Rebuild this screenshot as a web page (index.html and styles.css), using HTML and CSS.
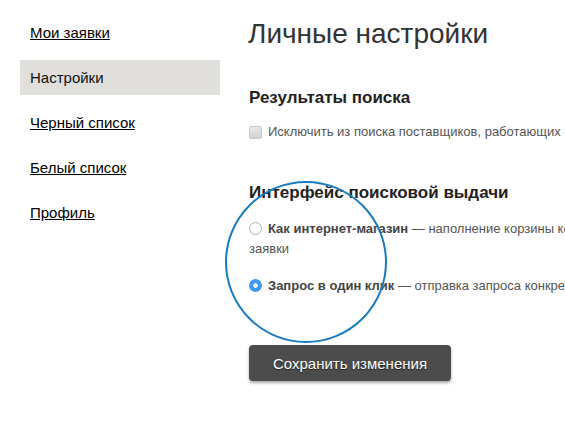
FILE: index.html
```html
<!DOCTYPE html>
<html lang="ru">
<head>
<meta charset="utf-8">
<title>Личные настройки</title>
<link rel="stylesheet" href="styles.css">
</head>
<body>
<div class="page">
  <nav class="sidebar">
    <a class="nav-item" href="#">Мои заявки</a>
    <span class="nav-item active">Настройки</span>
    <a class="nav-item" href="#">Черный список</a>
    <a class="nav-item" href="#">Белый список</a>
    <a class="nav-item" href="#">Профиль</a>
  </nav>
  <main class="content">
    <h1 class="title">Личные настройки</h1>
    <h2 class="section-title first">Результаты поиска</h2>
    <label class="check-row"><span class="checkbox"></span><span class="check-text">Исключить из поиска поставщиков, работающих</span></label>
    <h2 class="section-title second">Интерфейс поисковой выдачи</h2>
    <p class="radio-row one"><span class="radio"></span><b>Как интернет-магазин</b> — наполнение корзины конкретными товарами и отправка<br>заявки</p>
    <p class="radio-row two"><span class="radio checked"></span><b>Запрос в один клик</b> — отправка запроса конкретному поставщику</p>
    <button class="save-btn" type="button">Сохранить изменения</button>
  </main>
</div>
<div class="lens"></div>
</body>
</html>
```
FILE: styles.css
```css
html, body {
  margin: 0;
  padding: 0;
  background: #fff;
  overflow: hidden;
}
body {
  width: 565px;
  height: 440px;
  position: relative;
  font-family: "Liberation Sans", Arial, Helvetica, sans-serif;
}
.page {
  display: flex;
  align-items: flex-start;
  padding-left: 20px;
}
.sidebar {
  width: 200px;
  flex: none;
  display: flex;
  flex-direction: column;
  gap: 10px;
  padding-top: 15px;
}
.nav-item {
  display: block;
  height: 35px;
  line-height: 35px;
  padding-left: 10px;
  font-size: 15px;
  color: #000;
  text-decoration: underline;
}
.nav-item.active {
  background: #e0dfdb;
  text-decoration: none;
  color: #111;
}
.content {
  flex: none;
  width: 560px;
  margin-left: 29px;
  padding-top: 18px;
}
.title {
  margin: 0;
  font-size: 28px;
  line-height: 32px;
  font-weight: normal;
  color: #333;
  margin-left: -1px;
}
.section-title {
  margin: 0;
  font-size: 17px;
  line-height: 20px;
  font-weight: bold;
  color: #222;
}
.section-title.first { margin-top: 38px; }
.section-title.second { margin-top: 41px; }
.check-row {
  display: flex;
  align-items: center;
  gap: 6px;
  margin-top: 14px;
  font-size: 13px;
  line-height: 20px;
  color: #555;
  white-space: nowrap;
}
.checkbox {
  width: 13px;
  height: 13px;
  box-sizing: border-box;
  border: 1px solid #c8c8c8;
  border-radius: 2px;
  background: linear-gradient(#e9e9e9, #d2d2d2);
  flex: none;
}
.radio-row {
  margin: 16px 0 0;
  font-size: 13px;
  line-height: 20px;
  color: #555;
  white-space: nowrap;
}
.radio-row.two { margin-top: 17px; }
.radio-row b { color: #444; }
.radio {
  display: inline-block;
  width: 13px;
  height: 13px;
  box-sizing: border-box;
  border-radius: 50%;
  border: 1px solid #b3b3b3;
  background: #fff;
  vertical-align: -2px;
  margin-right: 6px;
}
.radio.checked {
  border: none;
  background: radial-gradient(circle, #fff 0 2px, #3d98f7 2.5px);
}
.save-btn {
  display: block;
  margin-top: 49px;
  width: 202px;
  height: 36px;
  border: none;
  border-radius: 4px;
  background: #4c4c4c;
  color: #fff;
  font-family: inherit;
  font-size: 15px;
  text-shadow: 0 1px 1px rgba(0,0,0,0.6);
  box-shadow: 0 2px 3px rgba(0,0,0,0.35);
  padding: 0;
}
.lens {
  position: absolute;
  left: 225px;
  top: 181px;
  width: 162px;
  height: 162px;
  box-sizing: border-box;
  border: 2px solid #1a7cc0;
  border-radius: 50%;
  pointer-events: none;
}
```
